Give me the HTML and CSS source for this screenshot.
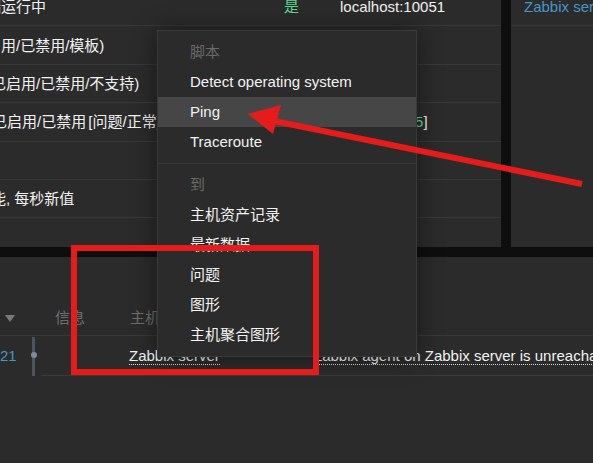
FILE: index.html
```html
<!DOCTYPE html>
<html lang="zh">
<head>
<meta charset="utf-8">
<title>Zabbix dashboard</title>
<link rel="stylesheet" href="styles.css">
</head>
<body>
<div class="dash">
  <div class="toprow">
    <section class="widget w-info">
      <div class="tbl">
        <div class="tr"><div class="c1"><span class="cut-a">端运行中</span></div><div class="c2 green">是</div><div class="c3">localhost:10051</div></div>
        <div class="tr"><div class="c1"><span class="cut-a">启用/已禁用/模板)</span></div><div class="c2">3</div><div class="c3">2 / 0 / 1</div></div>
        <div class="tr"><div class="c1"><span class="cut-b">已启用/已禁用/不支持)</span></div><div class="c2">93</div><div class="c3">86 / 0 / 7</div></div>
        <div class="tr"><div class="c1"><span class="cut-c">已启用/已禁用 [问题/正常]</span></div><div class="c2">69</div><div class="c3">69 / 0 [<span class="red">3</span> / <span class="green">65</span>]</div></div>
        <div class="tr"><div class="c1"></div><div class="c2">2</div><div class="c3"></div></div>
        <div class="tr"><div class="c1"><span class="cut-b">能, 每秒新值</span></div><div class="c2">1.27</div><div class="c3"></div></div>
        <div class="tr"><div class="c1"></div><div class="c2"></div><div class="c3"></div></div>
      </div>
    </section>
    <section class="widget w-right">
      <div class="rtr"><span class="link">Zabbix server</span></div>
    </section>
  </div>
  <section class="widget w-problems">
    <div class="phead">
      <div class="h-sort"><span class="tri"></span></div>
      <div class="h-info">信息</div>
      <div class="h-host">主机</div>
      <div class="h-desc">问题</div>
    </div>
    <div class="prow">
      <div class="ptime">21</div>
      <div class="tl"><span class="dot"></span></div>
      <div class="prest">
        <div class="p-host"><span class="ul">Zabbix server</span></div>
        <div class="p-desc"><span class="ul">Zabbix agent on Zabbix server is unreachable for 5 minutes</span></div>
      </div>
    </div>
  </section>
</div>

<div class="menu">
  <div class="m-head">脚本</div>
  <div class="m-item">Detect operating system</div>
  <div class="m-item active">Ping</div>
  <div class="m-item">Traceroute</div>
  <div class="m-sep"></div>
  <div class="m-head">到</div>
  <div class="m-item">主机资产记录</div>
  <div class="m-item">最新数据</div>
  <div class="m-item">问题</div>
  <div class="m-item">图形</div>
  <div class="m-item">主机聚合图形</div>
</div>

<svg class="annot" width="593" height="463" viewBox="0 0 593 463" xmlns="http://www.w3.org/2000/svg">
  <line x1="274" y1="121" x2="582" y2="184" stroke="#e61c1c" stroke-width="6"/>
  <polygon points="248,114 281,105 273,134" fill="#e61c1c"/>
  <rect x="74" y="248" width="242" height="124" fill="none" stroke="#e61c1c" stroke-width="6"/>
</svg>
</body>
</html>
```

FILE: styles.css
```css
html, body {
  margin: 0;
  padding: 0;
}
body {
  width: 593px;
  height: 463px;
  overflow: hidden;
  position: relative;
  background: #0e0e0e;
  color: #f2f2f2;
  font-family: "Liberation Sans", Arial, "Noto Sans CJK SC", sans-serif;
  font-size: 15px;
  line-height: 17px;
}

.toprow {
  display: flex;
  gap: 10px;
  height: 247px;
}
.widget {
  background: #2b2b2b;
  overflow: hidden;
}
.w-info {
  width: 501px;
  flex: none;
}
.w-right {
  flex: 1;
  min-width: 0;
  white-space: nowrap;
}

.tbl {
  margin-top: -12px;
}
.tr {
  display: grid;
  grid-template-columns: 284px 56px 1fr;
  align-items: center;
  height: 38.4px;
  box-sizing: border-box;
  border-bottom: 1px solid #383838;
  white-space: nowrap;
}
.c1 span {
  display: inline-block;
}
.cut-a { margin-left: -14px; }
.cut-b { margin-left: -9px; }
.cut-c { margin-left: -8px; word-spacing: -2px; }
.green { color: #59db8f; }
.red { color: #e45959; }

.rtr {
  display: flex;
  align-items: center;
  height: 38px;
  margin-top: -12px;
  padding-left: 13px;
  box-sizing: border-box;
  border-bottom: 1px solid #383838;
}
.link { color: #4796c4; }

.w-problems {
  margin-top: 10px;
  height: 206px;
}
.phead {
  display: flex;
  align-items: center;
  height: 37px;
  box-sizing: border-box;
  margin-top: 42px;
  border-bottom: 1px solid #383838;
  color: #6e6e6e;
  white-space: nowrap;
}
.h-sort {
  width: 55px;
  flex: none;
  padding-left: 5px;
  box-sizing: border-box;
  display: flex;
  align-items: center;
}
.tri {
  display: inline-block;
  width: 0;
  height: 0;
  border-left: 5px solid transparent;
  border-right: 5px solid transparent;
  border-top: 7px solid #7a7a7a;
  margin-top: 3px;
}
.h-info { width: 75px; flex: none; }
.h-host { width: 183px; flex: none; }

.prow {
  display: flex;
  height: 40px;
  white-space: nowrap;
}
.ptime {
  width: 24px;
  flex: none;
  color: #4796c4;
  display: flex;
  align-items: center;
  padding-bottom: 1px;
  box-sizing: border-box;
}
.tl {
  width: 18px;
  flex: none;
  position: relative;
}
.tl::before {
  content: "";
  position: absolute;
  left: 8px;
  top: 1px;
  bottom: 0;
  width: 3px;
  background: #4a5561;
}
.dot {
  position: absolute;
  left: 6.5px;
  top: 16px;
  width: 6px;
  height: 6px;
  border-radius: 50%;
  background: #7d8d9c;
}
.prest {
  flex: 1;
  min-width: 0;
  overflow: hidden;
  display: flex;
  align-items: center;
  padding-left: 87px;
  padding-bottom: 1px;
  box-sizing: border-box;
  border-bottom: 1px solid #3a3a3a;
}
.p-host {
  width: 184px;
  flex: none;
}
.p-desc {
  flex: none;
}
.ul {
  border-bottom: 1px dotted #d8d8d8;
}

.menu {
  position: absolute;
  left: 157px;
  top: 30px;
  width: 260px;
  box-sizing: border-box;
  padding: 6px 0;
  background: #2b2b2b;
  border: 1px solid #3a3a3a;
  box-shadow: 0 0 24px rgba(0, 0, 0, 0.45);
  white-space: nowrap;
}
.m-head,
.m-item {
  height: 30px;
  line-height: 30px;
  padding-left: 32px;
}
.m-head {
  color: #6a6a6a;
}
.m-item.active {
  background: #464646;
}
.m-sep {
  height: 1px;
  background: #3a3a3a;
  margin: 6px 0 6px;
}

.annot {
  position: absolute;
  left: 0;
  top: 0;
  pointer-events: none;
}
```
